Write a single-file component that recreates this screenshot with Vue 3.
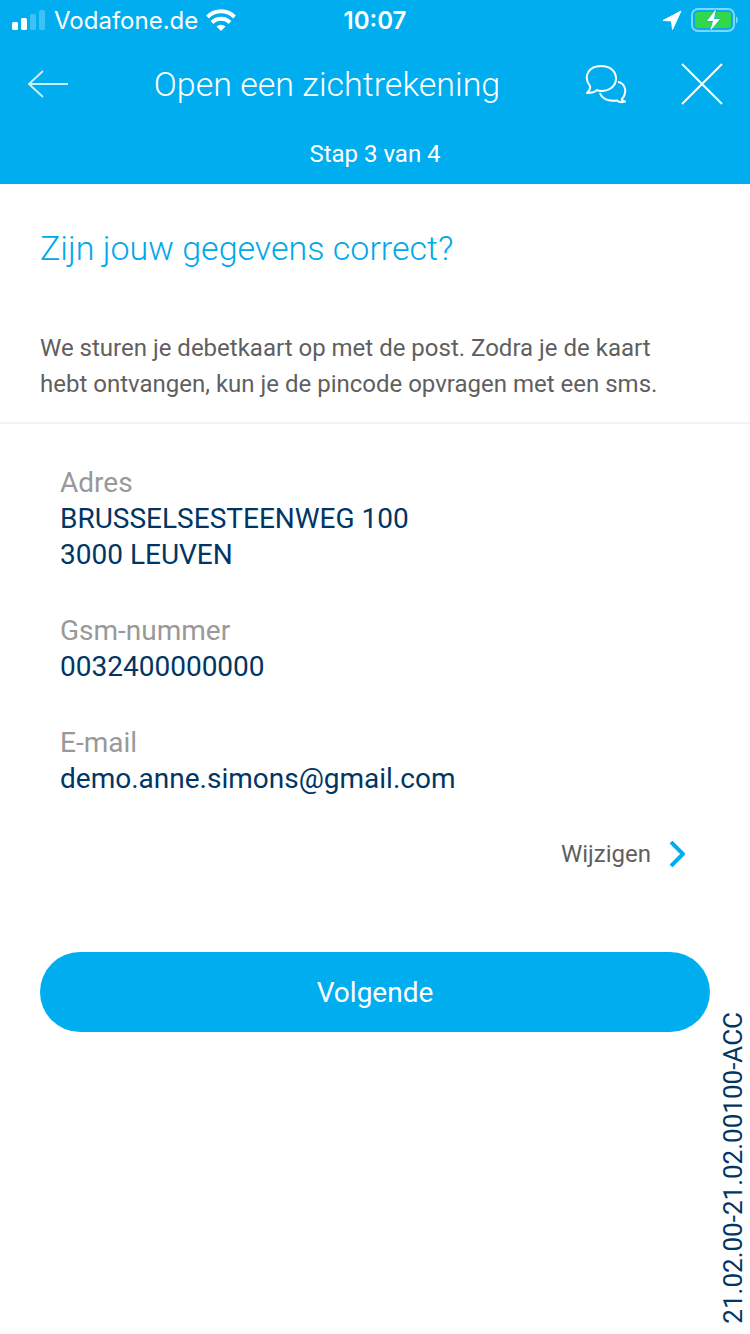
<script setup>
const details = [
  { label: 'Adres', lines: ['BRUSSELSESTEENWEG 100', '3000 LEUVEN'] },
  { label: 'Gsm-nummer', lines: ['0032400000000'] },
  { label: 'E-mail', lines: ['demo.anne.simons@gmail.com'] },
]
</script>

<template>
  <div class="screen">
    <header class="top">
      <div class="status">
        <div class="status-side">
          <svg width="34" height="20" viewBox="0 0 34 20" aria-hidden="true">
            <rect x="0" y="12" width="6" height="8" rx="1.5" fill="#fff" />
            <rect x="9" y="8" width="6" height="12" rx="1.5" fill="#fff" />
            <rect x="18" y="4" width="6" height="16" rx="1.5" fill="#fff" opacity=".25" />
            <rect x="27" y="0" width="6" height="20" rx="1.5" fill="#fff" opacity=".25" />
          </svg>
          <span class="carrier">Vodafone.de</span>
          <svg width="30" height="22" viewBox="0 0 30 22" aria-hidden="true">
            <path d="M1.500 8a19 19 0 0 1 27 0M6 13.500a12.500 12.500 0 0 1 18 0" fill="none" stroke="#fff" stroke-width="4" />
            <path d="M10.500 17.500a6.500 6.500 0 0 1 9 0L15 22z" fill="#fff" />
          </svg>
        </div>
        <time class="clock">10:07</time>
        <div class="status-side right">
          <svg width="20" height="20" viewBox="0 0 20 20" aria-hidden="true">
            <path d="M19 1 1 10.500 9.500 11 10.500 19.500z" fill="#fff" stroke="#fff" stroke-linejoin="round" />
          </svg>
          <svg width="48" height="24" viewBox="0 0 48 24" aria-hidden="true">
            <rect x="2" y="1" width="42" height="22" rx="6" fill="none" stroke="#fff" stroke-width="2" opacity=".5" />
            <rect x="5" y="4" width="36" height="16" rx="3" fill="#32d74b" />
            <path d="M46 8.500v7c2.500-1 2.500-6 0-7z" fill="#fff" opacity=".5" />
            <path d="M26 1 17 13h6l-3 10 10-12h-6z" fill="#fff" stroke="#00adef" stroke-width="1" paint-order="stroke" />
          </svg>
        </div>
      </div>
      <div class="bar">
        <button class="icon back" aria-label="Terug">
          <svg width="42" height="30" viewBox="0 0 42 30"><path d="M41 15H2M16 2 2 15l14 13" /></svg>
        </button>
        <h1>Open een zichtrekening</h1>
        <button class="icon chat" aria-label="Chat">
          <svg width="42" height="40" viewBox="0 0 42 40">
            <path d="M5 22C-2 13 3 2 16 2c9 0 15 5 15 12.500S25 27 16 27c-2 0-3 0-4-1-3 3-6 3-10 3 2-2 4-4 3-7z" />
            <path d="M33 18c7 1 10 10 4 17-1 1 1 2 3 2.500-3 1-6 1-8-1-7 1-15-1-17-7.500" />
          </svg>
        </button>
        <button class="icon" aria-label="Sluiten">
          <svg width="42" height="42" viewBox="0 0 42 42"><path d="m1 1 40 40M41 1 1 41" /></svg>
        </button>
      </div>
      <p class="step">Stap 3 van 4</p>
    </header>
    <main>
      <section class="intro">
        <h2>Zijn jouw gegevens correct?</h2>
        <p>We sturen je debetkaart op met de post. Zodra je de kaart hebt ontvangen, kun je de pincode opvragen met een sms.</p>
      </section>
      <dl>
        <div v-for="item in details" :key="item.label">
          <dt>{{ item.label }}</dt>
          <dd v-for="line in item.lines" :key="line">{{ line }}</dd>
        </div>
      </dl>
      <div class="actions">
        <button class="edit">
          Wijzigen
          <svg width="16" height="26" viewBox="0 0 16 26" aria-hidden="true"><path d="m2 1 12 12L2 25" /></svg>
        </button>
        <button class="next">Volgende</button>
      </div>
    </main>
    <small class="version">21.02.00-21.02.00100-ACC</small>
  </div>
</template>

<style>
body { margin: 0; background: #fff; }
</style>

<style scoped>
.screen { position: relative; min-height: 100vh; font-family: Roboto, "Liberation Sans", sans-serif; color: #5f5f5f; }
h1, h2, p, dl, dd { margin: 0; font-weight: 300; }
button { border: 0; padding: 0; background: none; font: inherit; color: inherit; }
svg { display: block; }
.top { padding-bottom: 4px; background: #00adef; color: #fff; }
.status { display: grid; grid-template-columns: 1fr auto 1fr; align-items: center; height: 40px; padding: 0 12px; font-family: Inter, sans-serif; }
.status-side { display: flex; align-items: center; gap: 8px; }
.right { justify-content: flex-end; }
.carrier { font-size: 24px; }
.clock { font-size: 24px; font-weight: 600; }
.bar { display: flex; align-items: center; height: 88px; padding: 0 27px; }
.icon path { fill: none; stroke: #fff; stroke-width: 2; stroke-linejoin: round; }
.back { opacity: .8; }
h1 { flex: 1; text-align: center; font-size: 34px; }
.chat { margin-right: 54px; }
.step { text-align: center; font-size: 24px; line-height: 52px; font-weight: 400; }
.intro { padding: 40px 40px 20px; border-bottom: 2px solid #f4f4f4; }
h2 { font-size: 34px; line-height: 48px; color: #00a8ea; }
.intro p { max-width: 640px; margin-top: 58px; font-size: 24px; line-height: 36px; font-weight: 400; }
dl { display: grid; gap: 40px; padding: 41px 60px 0; font-size: 28px; line-height: 36px; }
dt { color: #999; font-weight: 400; }
dl, dd { font-weight: 400; }
dd { color: #003665; }
.actions { display: flex; flex-direction: column; padding: 39px 40px 0; }
.edit { display: flex; align-items: center; align-self: flex-end; gap: 18px; height: 36px; margin-right: 25px; font-size: 24px; }
.edit path { fill: none; stroke: #00adef; stroke-width: 4; }
.next { height: 80px; margin-top: 80px; border-radius: 40px; background: #00adef; color: #fff; font-size: 28px; }
.version { position: absolute; right: 3px; bottom: 10px; writing-mode: vertical-rl; transform: rotate(180deg); font-size: 26px; line-height: 28px; color: #003665; }
</style>
